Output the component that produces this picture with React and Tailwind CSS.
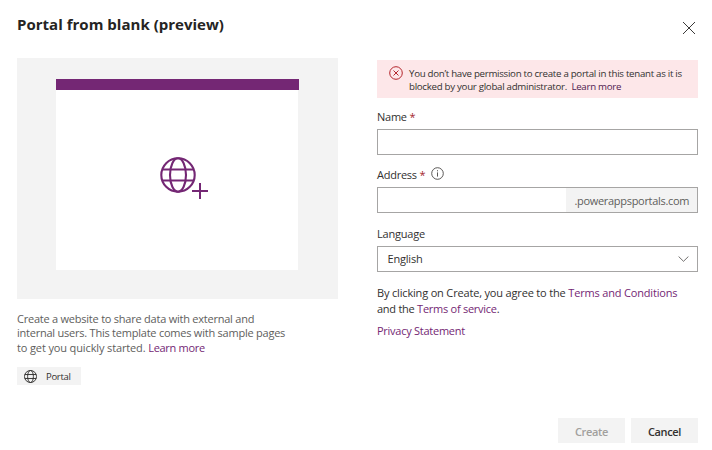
const Globe = ({ className, strokeWidth }) => (
  <svg className={className} viewBox="0 0 36 36" fill="none" stroke="currentColor" strokeWidth={strokeWidth}>
    <circle cx="18" cy="18" r="16.7" />
    <ellipse cx="18" cy="18" rx="8" ry="16.7" />
    <path d="M2.3 12.5h31.4M2.3 23.5h31.4" />
  </svg>
);

const Link = ({ children }) => <a className="text-[#742774]">{children}</a>;

export default function App() {
  return (
    <main className="relative h-[450px] w-[712px] overflow-hidden bg-white font-['Open_Sans','Noto_Sans',sans-serif] text-[11px] text-[#323130]">
      <header className="flex h-[58px] items-start justify-between pl-[17px] pr-[16px]">
        <h1 className="mt-[13px] whitespace-nowrap text-[15px] leading-[22px] font-bold tracking-[0.02px] text-[#252423]">Portal from blank (preview)</h1>
        <svg className="mt-[21px] h-[14px] w-[14px]" viewBox="0 0 14 14" fill="none" stroke="#3b3a39" strokeWidth="1">
          <path d="M1 1l12 12M13 1L1 13" />
        </svg>
      </header>
      <div className="flex pl-[17px]">
        <section className="w-[321px]">
          <div className="h-[240.5px] bg-[#f3f3f3] pl-[39px] pt-[21px]">
            <div className="h-[191px] w-[242px] bg-white">
              <div className="h-[11px] w-[243px] bg-[#742774]" />
              <div className="flex pl-[103.5px] pt-[66.5px] text-[#742774]">
                <Globe className="h-[36px] w-[36px]" strokeWidth={2.1} />
                <svg className="-ml-[4px] mt-[26.5px] h-[16px] w-[16px]" viewBox="0 0 16 16" stroke="currentColor" strokeWidth="2">
                  <path d="M8 0v16M0 8h16" />
                </svg>
              </div>
            </div>
          </div>
          <div className="mt-[13.5px] whitespace-nowrap leading-[14.4px] text-[#605e5c]">
            <p className="tracking-[-0.23px]">Create a website to share data with external and</p>
            <p className="tracking-[-0.23px]">internal users. This template comes with sample pages</p>
            <p className="tracking-[-0.13px]">to get you quickly started. <Link><span className="tracking-[-0.3px]">Learn more</span></Link></p>
          </div>
          <div className="mt-[12px] flex h-[18px] w-[64px] items-center bg-[#f3f3f3] pl-[7px]">
            <Globe className="h-[13px] w-[13px] shrink-0" strokeWidth={2.6} />
            <span className="ml-[9px] mt-[1px] text-[9.5px] leading-[18px] tracking-[-0.3px]">Portal</span>
          </div>
        </section>
        <section className="ml-[39px] w-[321.4px]">
          <div className="mt-[2px] flex h-[38px] bg-[#fde7e9] pl-[12px]">
            <svg className="mt-[6px] h-[14px] w-[14px] shrink-0" viewBox="0 0 14 14" fill="none" stroke="#b4262c" strokeWidth="1">
              <circle cx="7" cy="7" r="6.3" />
              <path d="M4.5 4.5l5 5M9.5 4.5l-5 5" />
            </svg>
            <div className="ml-[6px] mt-[7px] whitespace-nowrap text-[9.7px] leading-[13px]">
              <p className="tracking-[-0.28px]">You don’t have permission to create a portal in this tenant as it is</p>
              <p className="tracking-[-0.28px]">blocked by your global administrator.&nbsp; <a className="text-[#501a50]">Learn more</a></p>
            </div>
          </div>
          <div className="mt-[11px] h-[16px] leading-[16px] tracking-[-0.25px]">Name <span className="text-[#a4262c]">*</span></div>
          <div className="mt-[4px] h-[26px] border border-[#a6a5a4]" />
          <div className="mt-[12px] flex h-[16px] leading-[16px]">
            <span className="tracking-[-0.25px]">Address <span className="text-[#a4262c]">*</span></span>
            <svg className="ml-[6px] h-[13px] w-[13px]" viewBox="0 0 13 13" fill="none" stroke="#484644" strokeWidth="0.9">
              <circle cx="6.5" cy="6.5" r="5.8" />
              <path d="M6.5 5.4v4.2M6.5 3.2v1.1" />
            </svg>
          </div>
          <div className="mt-[4px] flex h-[26px] justify-end border border-[#a6a5a4]">
            <div className="w-[131px] whitespace-nowrap bg-[#f3f3f3] pl-[8px] leading-[25px] tracking-[-0.3px] text-[#605e5c]">.powerappsportals.com</div>
          </div>
          <div className="mt-[13px] h-[16px] leading-[16px] tracking-[-0.2px]">Language</div>
          <div className="mt-[4px] flex h-[26px] items-center justify-between border border-[#a6a5a4] pl-[9.5px] pr-[8px]">
            <span className="tracking-[-0.2px]">English</span>
            <svg className="h-[6px] w-[11px]" viewBox="0 0 11 6" fill="none" stroke="#605e5c" strokeWidth="0.9">
              <path d="M.6.5l4.9 4.8L10.4.5" />
            </svg>
          </div>
          <div className="mt-[13px] whitespace-nowrap leading-[16px]">
            <p className="tracking-[-0.17px]">By clicking on Create, you agree to the <Link>Terms and Conditions</Link></p>
            <p className="tracking-[-0.26px]">and the <Link>Terms of service</Link>.</p>
            <p className="mt-[6px] tracking-[-0.26px]"><Link>Privacy Statement</Link></p>
          </div>
        </section>
      </div>
      <footer className="mt-[33px] flex justify-end gap-[6px] pr-[14px] font-semibold">
        <button className="h-[25px] w-[67px] bg-[#f3f3f3] pt-[3px] leading-[20px] tracking-[-0.35px] text-[#a19f9d]">Create</button>
        <button className="h-[25px] w-[67px] bg-[#f3f3f3] pt-[3px] leading-[20px] tracking-[-0.35px]">Cancel</button>
      </footer>
    </main>
  );
}
